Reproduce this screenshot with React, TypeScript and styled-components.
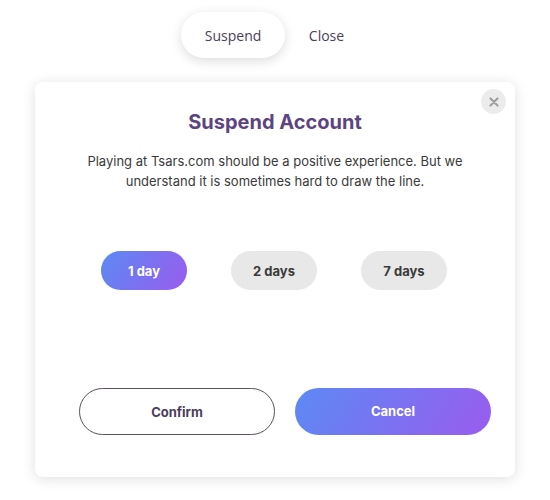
import React, { useState } from 'react';
import styled, { createGlobalStyle, css } from 'styled-components';

const GlobalStyle = createGlobalStyle`
  html, body {
    margin: 0;
    padding: 0;
    background: #ffffff;
  }
  body {
    font-family: Inter, 'Open Sans', Arial, sans-serif;
  }
`;

const gradient = 'linear-gradient(120deg, #5d8af4 0%, #7a72f1 50%, #9a5cee 100%)';

const Page = styled.div`
  width: 550px;
  height: 500px;
  display: flex;
  flex-direction: column;
  align-items: center;
`;

const Tabs = styled.nav`
  display: flex;
  align-items: center;
  gap: 24px;
  margin-top: 12px;
  margin-right: 25px;
`;

const Tab = styled.button<{ $active?: boolean }>`
  height: 46px;
  padding: 0 24px;
  border: none;
  border-radius: 23px;
  background: transparent;
  font-family: 'Open Sans', sans-serif;
  font-size: 14px;
  color: #4b3e5c;
  cursor: pointer;
  ${(p) =>
    p.$active
      ? css`
          width: 104px;
          background: #fff;
          box-shadow: 0 3px 12px rgba(0, 0, 0, 0.14);
        `
      : css`
          padding: 0;
        `}
`;

const Modal = styled.section`
  position: relative;
  width: 480px;
  box-sizing: border-box;
  margin-top: 24px;
  padding: 28px 24px 42px;
  background: #fff;
  border-radius: 8px;
  box-shadow: 0 2px 14px rgba(0, 0, 0, 0.13);
  display: flex;
  flex-direction: column;
  align-items: center;
`;

const CloseButton = styled.button`
  position: absolute;
  top: 7px;
  right: 9px;
  width: 25px;
  height: 25px;
  border-radius: 50%;
  border: none;
  background: #ececec;
  display: flex;
  align-items: center;
  justify-content: center;
  padding: 0;
  cursor: pointer;
`;

const Title = styled.h2`
  margin: 0;
  font-size: 20px;
  line-height: 24px;
  font-weight: 700;
  color: #5d4480;
`;

const Text = styled.p`
  margin: 17px 0 0;
  width: 390px;
  text-align: center;
  font-size: 13px;
  line-height: 20px;
  color: #3a3a3a;
`;

const DayRow = styled.div`
  display: flex;
  gap: 44px;
  margin-top: 60px;
  margin-right: 2px;
`;

const DayButton = styled.button<{ $selected?: boolean }>`
  width: 86px;
  height: 39px;
  border: none;
  border-radius: 20px;
  font-family: inherit;
  font-size: 13px;
  font-weight: 700;
  cursor: pointer;
  color: ${(p) => (p.$selected ? '#fff' : '#3a3a3a')};
  background: ${(p) => (p.$selected ? gradient : '#e8e8e8')};
`;

const ActionRow = styled.div`
  display: flex;
  gap: 20px;
  margin-top: 98px;
  margin-left: 20px;
`;

const ActionButton = styled.button<{ $primary?: boolean }>`
  width: 196px;
  height: 47px;
  border-radius: 24px;
  font-family: inherit;
  font-size: 13px;
  font-weight: 700;
  cursor: pointer;
  ${(p) =>
    p.$primary
      ? css`
          border: none;
          color: #fff;
          background: ${gradient};
          padding-bottom: 3px;
        `
      : css`
          border: 1px solid #5a5060;
          color: #4b3e5c;
          background: #fff;
        `}
`;

const days = ['1 day', '2 days', '7 days'];

export default function App() {
  const [day, setDay] = useState(0);
  return (
    <Page>
      <GlobalStyle />
      <Tabs>
        <Tab $active>Suspend</Tab>
        <Tab>Close</Tab>
      </Tabs>
      <Modal>
        <CloseButton aria-label="close">
          <svg width="10" height="10" viewBox="0 0 10 10">
            <path d="M1.5 1.5 L8.5 8.5 M8.5 1.5 L1.5 8.5" stroke="#a0a0a0" strokeWidth="2.2" strokeLinecap="round" />
          </svg>
        </CloseButton>
        <Title>Suspend Account</Title>
        <Text>
          Playing at Tsars.com should be a positive experience. But we understand it is sometimes hard to draw the line.
        </Text>
        <DayRow>
          {days.map((d, i) => (
            <DayButton key={d} $selected={i === day} onClick={() => setDay(i)}>
              {d}
            </DayButton>
          ))}
        </DayRow>
        <ActionRow>
          <ActionButton>Confirm</ActionButton>
          <ActionButton $primary>Cancel</ActionButton>
        </ActionRow>
      </Modal>
    </Page>
  );
}
